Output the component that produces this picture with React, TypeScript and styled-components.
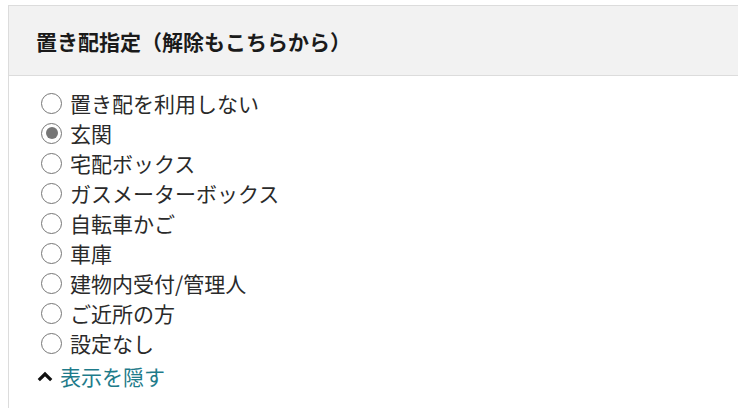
import React, { useState } from "react";
import styled, { createGlobalStyle } from "styled-components";

const Global = createGlobalStyle`
  html, body { margin: 0; padding: 0; background: #fff; overflow: hidden; }
  body { font-family: "Noto Sans CJK JP", "Noto Sans", sans-serif; }
`;

const Panel = styled.section`
  margin: 5px 0 0 8px;
  width: 760px;
  border-top: 1px solid #dcdcdc;
  border-left: 1px solid #dcdcdc;
  min-height: 420px;
`;

const Header = styled.header`
  height: 69px;
  background: #f2f2f2;
  border-bottom: 1px solid #dcdcdc;
  display: flex;
  align-items: center;
  padding-left: 27px;
`;

const Title = styled.h2`
  margin: 0;
  font-size: 21px;
  font-weight: 700;
  color: #1a1a1a;
`;

const List = styled.div`
  display: flex;
  flex-direction: column;
  padding: 12px 0 0 32px;
`;

const Option = styled.label`
  display: flex;
  align-items: center;
  height: 30px;
  gap: 8px;
  font-size: 21px;
  color: #2a2a2a;
  cursor: pointer;
`;

const Radio = styled.input.attrs({ type: "radio" })`
  appearance: none;
  box-sizing: border-box;
  margin: 0;
  width: 21px;
  height: 21px;
  border-radius: 50%;
  border: 1.5px solid #767676;
  background: #fff;
  display: grid;
  place-items: center;
  flex-shrink: 0;
  &:checked::after {
    content: "";
    width: 12px;
    height: 12px;
    border-radius: 50%;
    background: #767676;
  }
`;

const Toggle = styled.button`
  display: flex;
  align-items: center;
  gap: 7px;
  height: 30px;
  margin-top: 3px;
  margin-left: -4px;
  padding: 0;
  border: none;
  background: none;
  font: inherit;
  font-size: 21px;
  color: #1e7b8a;
  cursor: pointer;
`;

const options = [
  "置き配を利用しない",
  "玄関",
  "宅配ボックス",
  "ガスメーターボックス",
  "自転車かご",
  "車庫",
  "建物内受付/管理人",
  "ご近所の方",
  "設定なし",
];

export default function App() {
  const [selected, setSelected] = useState(1);
  return (
    <>
      <Global />
      <Panel>
        <Header>
          <Title>置き配指定（解除もこちらから）</Title>
        </Header>
        <List>
          {options.map((o, i) => (
            <Option key={o}>
              <Radio
                name="okihai"
                checked={selected === i}
                onChange={() => setSelected(i)}
              />
              {o}
            </Option>
          ))}
          <Toggle>
            <svg width="16" height="11" viewBox="0 0 16 11" aria-hidden>
              <path d="M1.8 9.2 L8 3 L14.2 9.2" fill="none" stroke="#111" strokeWidth="3.2" />
            </svg>
            表示を隠す
          </Toggle>
        </List>
      </Panel>
    </>
  );
}
